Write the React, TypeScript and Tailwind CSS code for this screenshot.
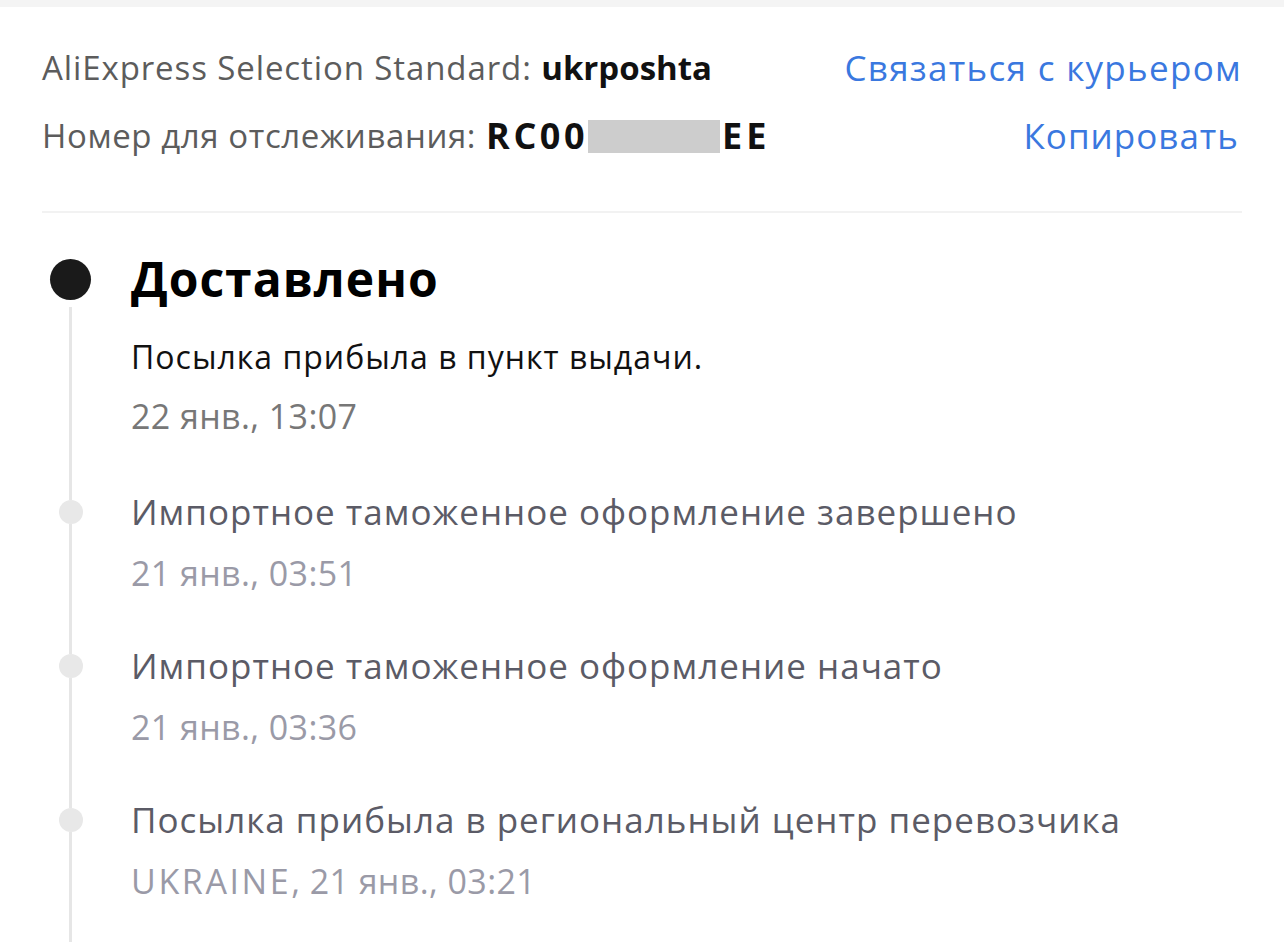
import React from "react";

type Ev = { title: string; place?: string; date: string };

const events: Ev[] = [
  { title: "Импортное таможенное оформление завершено", date: "21 янв., 03:51" },
  { title: "Импортное таможенное оформление начато", date: "21 янв., 03:36" },
  { title: "Посылка прибыла в региональный центр перевозчика", place: "UKRAINE", date: "21 янв., 03:21" },
];

export default function App() {
  return (
    <div className="w-[1284px] h-[942px] bg-white overflow-hidden font-['Open_Sans','Noto_Sans',sans-serif]">
      <div className="h-[7px] bg-[#f4f4f4]" />
      {/* header */}
      <div className="px-[42px] pt-[39px]">
        <div className="flex items-center justify-between h-[44px]">
          <div className="text-[33px] text-[#5c5c5c] leading-[44px]">
            <span className="tracking-[0.9px]">AliExpress Selection Standard: </span>
            <span className="font-bold text-[#111]">ukrposhta</span>
          </div>
          <div className="text-[35px] text-[#3a78df] leading-[44px] tracking-[1.3px]">Связаться с курьером</div>
        </div>
        <div className="flex items-center justify-between h-[44px] mt-[24px]">
          <div className="flex items-center text-[33px] text-[#5c5c5c] leading-[44px]">
            <span className="tracking-[0.6px]">Номер для отслеживания:</span>
            <span className="ml-[10px] font-bold text-[#111] text-[36px] tracking-[3.5px]">RC00</span>
            <span className="inline-block w-[132px] h-[33px] bg-[#cdcdcd]" />
            <span className="ml-[2px] font-bold text-[#111] text-[36px] tracking-[4px]">EE</span>
          </div>
          <div className="text-[35px] text-[#3a78df] leading-[44px] tracking-[1px] pr-[3px]">Копировать</div>
        </div>
        <div className="h-[2px] bg-[#f2f2f2] mt-[53px]" />
      </div>

      {/* timeline */}
      <div className="pt-[38px]">
        {/* delivered */}
        <div className="flex">
          <div className="ml-[50px] w-[41px] flex flex-col items-center">
            <div className="h-[56px] flex items-center">
              <div className="w-[41px] h-[41px] rounded-full bg-[#1a1a1a]" />
            </div>
            <div className="flex-1 w-[3px] bg-[#e6e6e6]" />
          </div>
          <div className="ml-[40px] pb-[51px]">
            <div className="h-[56px] text-[48px] font-bold text-black leading-[56px] tracking-[1px]">Доставлено</div>
            <div className="mt-[28px] text-[32px] text-[#111] leading-[44px] tracking-[1px]">Посылка прибыла в пункт выдачи.</div>
            <div className="mt-[15px] text-[34px] text-[#777] leading-[44px] tracking-[0.4px]">22 янв., 13:07</div>
          </div>
        </div>
        {events.map((e, i) => (
          <div className="flex" key={i}>
            <div className="ml-[50px] w-[41px] flex flex-col items-center">
              <div className="h-[46px] flex flex-col items-center">
                <div className="flex-1 w-[3px] bg-[#e6e6e6]" />
                <div className="w-[24px] h-[24px] rounded-full bg-[#e8e8e8]" />
                <div className="flex-1 w-[3px] bg-[#e6e6e6]" />
              </div>
              <div className="flex-1 w-[3px] bg-[#e6e6e6]" />
            </div>
            <div className="ml-[40px] pb-[48px]">
              <div className="h-[46px] text-[35px] text-[#5b5b66] leading-[46px] tracking-[1px]">{e.title}</div>
              <div className="mt-[16px] text-[34px] text-[#9a9aa7] leading-[44px] tracking-[0.4px]">
                {e.place && (
                  <>
                    <span className="tracking-[2.6px]">{e.place}</span>,{" "}
                  </>
                )}
                {e.date}
              </div>
            </div>
          </div>
        ))}
      </div>
    </div>
  );
}
